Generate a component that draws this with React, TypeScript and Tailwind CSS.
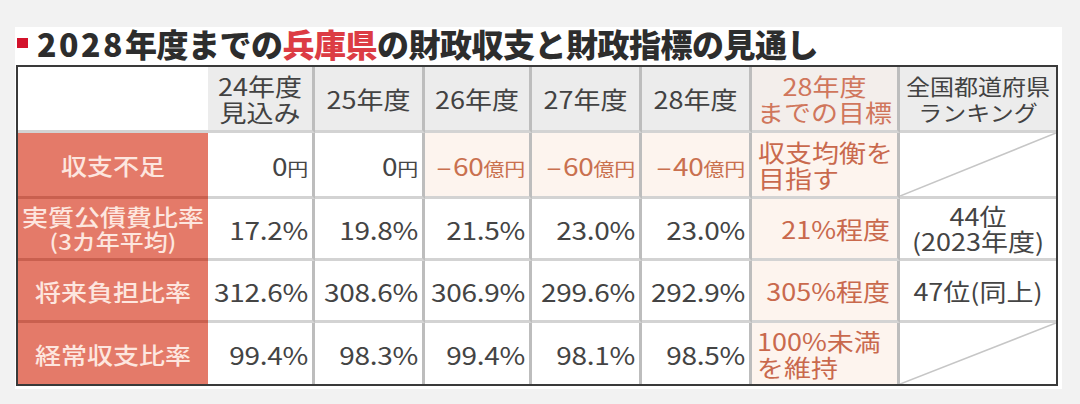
import React from "react";

const hdr =
  "flex items-center justify-center text-center bg-[#ececec] text-[#424242] border-r-[3px] border-b-[3px] border-r-[#bdbdbd] border-b-[#d3d3d3] text-[27px] leading-[29px]";
const lbl =
  "flex items-center justify-center text-center bg-[#e47a69] text-[#fde6df] border-b-[3px] border-b-[#c9604f] text-[26px] leading-[27px] font-medium";
const lblLast =
  "flex items-center justify-center text-center bg-[#e47a69] text-[#fde6df] text-[26px] leading-[27px] font-medium";
const num =
  "flex items-center justify-end pr-[4px] bg-white text-[#444444] border-r-[3px] border-b-[3px] border-r-[#bdbdbd] border-b-[#d3d3d3] text-[28px] tracking-[-0.3px]";
const numLast =
  "flex items-center justify-end pr-[4px] bg-white text-[#444444] border-r-[3px] border-r-[#bdbdbd] text-[28px] tracking-[-0.3px]";
const neg =
  "flex items-center justify-end pr-[4px] bg-[#fdf4ee] text-[#c9704f] border-r-[3px] border-b-[3px] border-r-[#bdbdbd] border-b-[#d3d3d3] text-[28px] tracking-[-0.3px]";
const tgtR =
  "flex items-center justify-end pr-[7px] bg-[#fdf4ee] text-[#c9694d] border-r-[3px] border-b-[3px] border-r-[#bdbdbd] border-b-[#d3d3d3] text-[27px] leading-[29px]";
const tgtL =
  "flex items-center justify-start pl-[6px] bg-[#fdf4ee] text-[#c9694d] border-r-[3px] border-b-[3px] border-r-[#bdbdbd] border-b-[#d3d3d3] text-[27px] leading-[29px]";
const tgtLLast =
  "flex items-center justify-start pl-[5px] bg-[#fdf4ee] text-[#c9694d] border-r-[3px] border-r-[#bdbdbd] text-[27px] leading-[29px]";
const rank =
  "flex items-center justify-center text-center bg-white text-[#444444] border-b-[3px] border-b-[#d3d3d3] text-[27px] leading-[28px]";
const rankDiag = "relative bg-white border-b-[3px] border-b-[#d3d3d3]";
const rankDiagLast = "relative bg-white";

function S({ children }: { children: React.ReactNode }) {
  return <span className="inline-block scale-y-[0.88]">{children}</span>;
}

function Diag() {
  return (
    <svg className="absolute inset-0 h-full w-full" preserveAspectRatio="none" viewBox="0 0 100 100">
      <line x1="0" y1="100" x2="100" y2="0" stroke="#c6c6c6" strokeWidth="1.6" vectorEffect="non-scaling-stroke" />
    </svg>
  );
}

const U = ({ children }: { children: React.ReactNode }) => (
  <span className="text-[21px]">{children}</span>
);

const M = () => <span className="mr-[2px]">–</span>;

export default function App() {
  return (
    <div className="min-h-[404px] w-[1080px] bg-[#f2f2f2] pt-[27px] font-['Noto_Sans_CJK_JP',sans-serif]">
      <div className="ml-[15px] w-[1047px] bg-white pl-[1px] pb-[3px]">
        <div className="mb-[6px] flex h-[32px] items-center">
          <span className="ml-[1px] h-[10px] w-[11px] bg-[#d3122b]" />
          <h1 className="ml-[9px] whitespace-nowrap text-[32px] leading-[32px] font-black tracking-[-0.5px] text-[#2d2d2d]">
            <span className="tracking-[2.5px]">2028</span>年度までの
            <span className="text-[#dc3c44]">兵庫県</span>の財政収支と財政指標の見通し
          </h1>
        </div>

        <div className="grid w-[1042px] grid-cols-[190px_107px_110px_107px_110px_110px_148px_156px] grid-rows-[66px_66px_62px_62px_61px] border-2 border-[#3a3a3a]">
          {/* header */}
          <div className="bg-white border-b-[3px] border-b-[#d3d3d3]" />
          <div className={hdr}>
            <S>24年度<br />見込み</S>
          </div>
          <div className={hdr}><S>25年度</S></div>
          <div className={hdr}><S>26年度</S></div>
          <div className={hdr}><S>27年度</S></div>
          <div className={hdr}><S>28年度</S></div>
          <div className="flex items-center justify-center text-center bg-[#f3eeeb] text-[#d0765c] border-r-[3px] border-b-[3px] border-r-[#bdbdbd] border-b-[#d3d3d3] text-[27px] leading-[29px]">
            <S>28年度<br />までの目標</S>
          </div>
          <div className="flex items-center justify-center text-center bg-[#ececec] text-[#424242] border-b-[3px] border-b-[#d3d3d3] text-[24px] leading-[29px]">
            <S>全国都道府県<br />ランキング</S>
          </div>

          {/* row 1 */}
          <div className={lbl}><S>収支不足</S></div>
          <div className={num}><S>0<U>円</U></S></div>
          <div className={num}><S>0<U>円</U></S></div>
          <div className={neg}><S><M />60<U>億円</U></S></div>
          <div className={neg}><S><M />60<U>億円</U></S></div>
          <div className={neg}><S><M />40<U>億円</U></S></div>
          <div className={tgtL}><S>収支均衡を<br />目指す</S></div>
          <div className={rankDiag}><Diag /></div>

          {/* row 2 */}
          <div className={lbl}>
            <S>
              実質公債費比率
              <br />
              <span className="text-[24px]">(3カ年平均)</span>
            </S>
          </div>
          <div className={num}><S>17.2%</S></div>
          <div className={num}><S>19.8%</S></div>
          <div className={num}><S>21.5%</S></div>
          <div className={num}><S>23.0%</S></div>
          <div className={num}><S>23.0%</S></div>
          <div className={tgtR}><S>21%程度</S></div>
          <div className={rank}><S>44位<br />(2023年度)</S></div>

          {/* row 3 */}
          <div className={lbl}><S>将来負担比率</S></div>
          <div className={num}><S>312.6%</S></div>
          <div className={num}><S>308.6%</S></div>
          <div className={num}><S>306.9%</S></div>
          <div className={num}><S>299.6%</S></div>
          <div className={num}><S>292.9%</S></div>
          <div className={tgtR}><S>305%程度</S></div>
          <div className={rank}><S>47位(同上)</S></div>

          {/* row 4 */}
          <div className={lblLast}><S>経常収支比率</S></div>
          <div className={numLast}><S>99.4%</S></div>
          <div className={numLast}><S>98.3%</S></div>
          <div className={numLast}><S>99.4%</S></div>
          <div className={numLast}><S>98.1%</S></div>
          <div className={numLast}><S>98.5%</S></div>
          <div className={tgtLLast}><S>100%未満<br />を維持</S></div>
          <div className={rankDiagLast}><Diag /></div>
        </div>
      </div>
    </div>
  );
}
